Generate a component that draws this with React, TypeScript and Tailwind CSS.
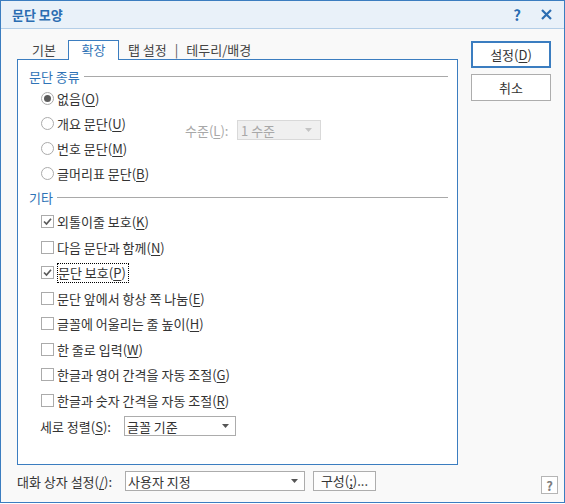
import type { ReactNode } from "react"

function U({ c }: { c: string }) {
  return <span className="underline decoration-[1px] underline-offset-[2px]">{c}</span>
}

function L({ t, m }: { t: string; m: string }) {
  return (
    <>
      {t}(<U c={m} />)
    </>
  )
}

function Arrow({ color = "#555" }: { color?: string }) {
  return (
    <svg width="7" height="4" viewBox="0 0 7 4">
      <path d="M0 0H7L3.5 4Z" fill={color} />
    </svg>
  )
}

function Radio({ on, children }: { on?: boolean; children: ReactNode }) {
  return (
    <div className="flex h-[25px] items-center pl-[12px]">
      <span className="flex h-[13px] w-[13px] items-center justify-center rounded-full border border-[#ababab] bg-white">
        {on && <span className="h-[7px] w-[7px] rounded-full bg-[#5c5c5c]" />}
      </span>
      <span className="ml-[3px]">{children}</span>
    </div>
  )
}

function Check({ on, focus, children }: { on?: boolean; focus?: boolean; children: ReactNode }) {
  return (
    <div className="flex h-[25.5px] items-center pl-[12px]">
      <span className="flex h-[13px] w-[13px] items-center justify-center border border-[#ababab] bg-white">
        {on && (
          <svg width="9" height="9" viewBox="0 0 9 9">
            <path d="M1 4.5L3.5 7L8 1.8" stroke="#5a5a5a" strokeWidth="1.7" fill="none" />
          </svg>
        )}
      </span>
      {focus ? (
        <span className="ml-[3px] border border-dotted border-black pr-[2px] leading-[18px]">{children}</span>
      ) : (
        <span className="ml-[3px]">{children}</span>
      )}
    </div>
  )
}

function Section({ title, h }: { title: string; h: string }) {
  return (
    <div className={`flex items-center gap-[4px] pr-[9px] ${h}`}>
      <span className="text-[#2f73b6]">{title}</span>
      <span className="h-px flex-1 bg-[#a9a9a9]" />
    </div>
  )
}

export default function App() {
  return (
    <div className="flex h-[503px] w-[565px] flex-col border border-[#3b7dc0] bg-[#f9f9f9] font-['Noto_Sans_CJK_KR','Noto_Sans',sans-serif] text-[13px] leading-[17px] text-[#333]">
      {/* title bar */}
      <div className="flex h-[28px] items-center border-b border-[#b4cee7] bg-[#e9f1f9] pl-[11px] pr-[12px]">
        <span className="text-[13px] font-bold text-[#2b6db2]">문단 모양</span>
        <span className="ml-auto mr-[20px] text-[15px] font-bold text-[#2b6db2]">?</span>
        <svg width="11" height="11" viewBox="0 0 11 11">
          <path d="M1 1L10 10M10 1L1 10" stroke="#2b6db2" strokeWidth="2.2" />
        </svg>
      </div>

      <div className="flex pl-[16px] pr-[13px] pt-[11px]">
        {/* tabs + panel */}
        <div className="flex w-[442px] flex-col">
          <div className="flex h-[20px]">
            <div className="w-[51px] border-b border-[#3b7dc0] pl-[15px] leading-[19px] text-[#444]">기본</div>
            <div className="w-[51px] border-l border-r border-t border-[#3b7dc0] bg-white text-center leading-[18px] text-[#2f73b6]">
              확장
            </div>
            <div className="flex flex-1 border-b border-[#3b7dc0] pl-[9px] leading-[19px] text-[#444]">
              <span>탭 설정</span>
              <span className="ml-[8px] text-[#555]">|</span>
              <span className="ml-[8px]">테두리/배경</span>
            </div>
          </div>
          <div className="flex h-[405px] flex-col border-b border-l border-r border-[#3b7dc0] bg-white pl-[11px] pt-[7px]">
            <Section title="문단 종류" h="h-[19px]" />
            <div className="flex">
              <div className="w-[156px]">
                <Radio on>
                  <L t="없음" m="O" />
                </Radio>
                <Radio>
                  <L t="개요 문단" m="U" />
                </Radio>
                <Radio>
                  <L t="번호 문단" m="M" />
                </Radio>
                <Radio>
                  <L t="글머리표 문단" m="B" />
                </Radio>
              </div>
              <div className="mt-[34px] flex h-[20px] items-center">
                <span className="w-[52px] text-[#a8a8a8]">
                  수준(<U c="L" />):
                </span>
                <div className="flex h-[20px] w-[84px] items-center border border-[#d9d9d9] bg-[#f0f0f0] pl-[3px] pr-[8px] text-[#a8a8a8]">
                  <span>1 수준</span>
                  <span className="ml-auto flex">
                    <Arrow color="#c4c4c4" />
                  </span>
                </div>
              </div>
            </div>
            <Section title="기타" h="h-[23px]" />
            <Check on>
              <L t="외톨이줄 보호" m="K" />
            </Check>
            <Check>
              <L t="다음 문단과 함께" m="N" />
            </Check>
            <Check on focus>
              <L t="문단 보호" m="P" />
            </Check>
            <Check>
              <L t="문단 앞에서 항상 쪽 나눔" m="E" />
            </Check>
            <Check>
              <L t="글꼴에 어울리는 줄 높이" m="H" />
            </Check>
            <Check>
              <L t="한 줄로 입력" m="W" />
            </Check>
            <Check>
              <L t="한글과 영어 간격을 자동 조절" m="G" />
            </Check>
            <Check>
              <L t="한글과 숫자 간격을 자동 조절" m="R" />
            </Check>
            <div className="flex h-[26px] items-center pl-[11px]">
              <span className="w-[84px]">
                세로 정렬(<U c="S" />):
              </span>
              <div className="flex h-[20px] w-[112px] items-center border border-[#acacac] bg-white pl-[2px] pr-[6px]">
                <span>글꼴 기준</span>
                <span className="ml-auto flex">
                  <Arrow />
                </span>
              </div>
            </div>
          </div>
        </div>

        {/* buttons */}
        <div className="ml-[13px] flex flex-col gap-[6px] pt-[1px]">
          <button className="h-[27px] w-[80px] border-2 border-[#3b7dc0] bg-white text-[13px]">
            설정(<U c="D" />)
          </button>
          <button className="h-[27px] w-[80px] border border-[#adadad] bg-white text-[13px]">취소</button>
        </div>
      </div>

      {/* bottom row */}
      <div className="flex items-start pl-[16px] pr-[6px] pt-[6px]">
        <div className="flex h-[20px] w-[108px] items-center">
          <span>
            대화 상자 설정(<U c="/" />):
          </span>
        </div>
        <div className="flex h-[20px] w-[180px] items-center border border-[#acacac] bg-white pl-[2px] pr-[6px]">
          <span>사용자 지정</span>
          <span className="ml-auto flex">
            <Arrow />
          </span>
        </div>
        <button className="ml-[8px] h-[20px] w-[63px] border border-[#adadad] bg-[#fdfdfd] leading-[18px]">
          구성(<U c=";" />)...
        </button>
        <div className="ml-auto mt-[5px] flex h-[18px] w-[17px] items-center justify-center border border-[#b5b5b5] bg-white text-[13px] font-bold text-[#7d7d7d]">
          ?
        </div>
      </div>
    </div>
  )
}
